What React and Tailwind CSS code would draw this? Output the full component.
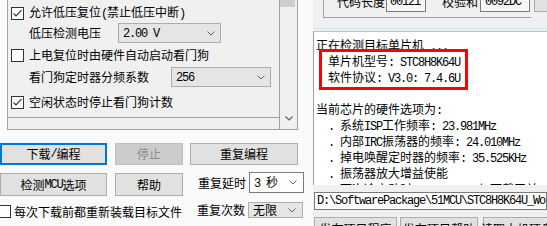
import React from "react";

function T({ s }) {
  const parts = s.split(/([\x00-\x7F]+)/).filter((p) => p.length);
  return (
    <>
      {parts.map((p, i) =>
        /^[\x00-\x7F]+$/.test(p) ? (
          <span key={i} className="font-['Liberation_Mono',monospace] tracking-[-1.2px]">
            {p}
          </span>
        ) : (
          <span key={i}>{p}</span>
        )
      )}
    </>
  );
}

function Check({ checked }) {
  return (
    <svg width="13" height="13" viewBox="0 0 13 13" className="shrink-0 block">
      <rect x="0.5" y="0.5" width="12" height="12" fill="#fff" stroke="#333" />
      {checked && (
        <path d="M2.5 6.5 L5 9 L10.5 3.2" fill="none" stroke="#333" strokeWidth="1.2" />
      )}
    </svg>
  );
}

function Chevron() {
  return (
    <svg width="8" height="5" viewBox="0 0 8 5" className="shrink-0 block">
      <path d="M0.5 0.5 L4 4 L7.5 0.5" fill="none" stroke="#606060" strokeWidth="1" />
    </svg>
  );
}

function Select({ text, className }) {
  return (
    <div className={"flex items-center justify-between border pl-[4px] pr-[5px] shrink-0 " + className}>
      <span className="whitespace-pre">
        <T s={text} />
      </span>
      <Chevron />
    </div>
  );
}

function Btn({ children, className }) {
  return (
    <div className={"flex items-center justify-center shrink-0 whitespace-pre " + className}>{children}</div>
  );
}

const lines = [
  "正在检测目标单片机 ...",
  "  单片机型号: STC8H8K64U",
  "  软件协议: V3.0: 7.4.6U",
  "",
  "当前芯片的硬件选项为:",
  "  . 系统ISP工作频率: 23.981MHz",
  "  . 内部IRC振荡器的频率: 24.010MHz",
  "  . 掉电唤醒定时器的频率: 35.525KHz",
  "  . 振荡器放大增益使能",
  "  . 下次冷启动时，P3.2/P3.3与下载无关",
];

export default function App() {
  return (
    <div className="w-[547px] h-[226px] overflow-hidden flex text-[12px] text-black font-['Noto_Sans_CJK_SC',sans-serif] leading-none">
      {/* Left column */}
      <div className="w-[313px] h-full flex flex-col bg-[#fafafa] shrink-0">
        <div className="ml-[7px] w-[291px] h-[130px] shrink-0 flex border-l border-b border-[#a0a0a0] bg-[#f0f0f0]">
          <div className="w-[271px] h-full flex flex-col pt-[3px]">
            <div className="h-[20px] flex items-center">
              <div className="ml-[3px]">
                <Check checked />
              </div>
              <span className="ml-[5px] whitespace-pre">
                <T s="允许低压复位(禁止低压中断)" />
              </span>
            </div>
            <div className="h-[20px] flex items-center">
              <span className="ml-[21px] w-[89px]">
                <T s="低压检测电压" />
              </span>
              <Select text="2.00 V" className="w-[103px] h-[20px] bg-[#e5e5e5] border-[#adadad]" />
            </div>
            <div className="mt-[2px] h-[20px] flex items-center">
              <div className="ml-[3px]">
                <Check />
              </div>
              <span className="ml-[5px] whitespace-pre">
                <T s="上电复位时由硬件自动启动看门狗" />
              </span>
            </div>
            <div className="mt-[2px] h-[20px] flex items-center">
              <span className="ml-[21px] w-[142px]">
                <T s="看门狗定时器分频系数" />
              </span>
              <Select text="256" className="w-[100px] h-[20px] bg-[#e5e5e5] border-[#adadad]" />
            </div>
            <div className="mt-[5px] h-[20px] flex items-center">
              <div className="ml-[3px]">
                <Check checked />
              </div>
              <span className="ml-[5px] whitespace-pre">
                <T s="空闲状态时停止看门狗计数" />
              </span>
            </div>
            <div className="mt-[5px] h-[1px] bg-[#a0a0a0]" />
          </div>
          <div className="relative w-[19px] h-full border-l border-r border-[#a0a0a0] bg-[#f0f0f0]">
            <div className="w-[15px] h-[7px] bg-[#cdcdcd]" />
            <div className="absolute left-[5px] top-[116px]">
              <svg width="8" height="5" viewBox="0 0 8 5" className="block">
                <path d="M0.5 0.5 L4 4 L7.5 0.5" fill="none" stroke="#606060" strokeWidth="1.2" />
              </svg>
            </div>
          </div>
        </div>

        {/* buttons area */}
        <div className="flex flex-col">
          <div className="mt-[13px] flex items-start">
            <Btn className="w-[107px] h-[22px] border-2 border-[#0078d7] bg-[#e1e1e1]">
              <T s="下载/编程" />
            </Btn>
            <Btn className="ml-[8px] w-[68px] h-[22px] border border-[#bfbfbf] bg-[#cccccc] text-[#8a8a8a]">
              <T s="停止" />
            </Btn>
            <Btn className="ml-[7px] w-[108px] h-[22px] border border-[#adadad] bg-[#e1e1e1]">
              <T s="重复编程" />
            </Btn>
          </div>
          <div className="mt-[8px] h-[23px] flex items-start">
            <Btn className="w-[107px] h-[23px] border border-[#adadad] bg-[#e1e1e1]">
              <T s="检测MCU选项" />
            </Btn>
            <Btn className="ml-[8px] w-[68px] h-[23px] border border-[#adadad] bg-[#e1e1e1]">
              <T s="帮助" />
            </Btn>
            <div className="ml-[15px] -mt-[1px] h-[21px] w-[51px] flex items-center">
              <T s="重复延时" />
            </div>
            <Select text="3 秒" className="-mt-[1px] w-[55px] h-[21px] bg-white border-[#7a7a7a] pl-[3px] pr-[6px]" />
          </div>
          <div className="mt-[6px] flex items-start">
            <div className="-ml-[2px] mt-[3px]">
              <Check />
            </div>
            <div className="ml-[3px] mt-[3px] h-[13px] w-[167px] flex items-center whitespace-pre">
              <T s="每次下载前都重新装载目标文件" />
            </div>
            <div className="ml-[16px] h-[16px] w-[51px] flex items-center">
              <T s="重复次数" />
            </div>
            <Select text="无限" className="w-[55px] h-[16px] bg-[#e5e5e5] border-[#adadad] pl-[3px] pr-[6px]" />
          </div>
        </div>
      </div>

      {/* Right column */}
      <div className="relative w-[234px] h-full bg-[#f0f0f0] flex flex-col shrink-0">
        <div className="ml-[10px] w-[208px] h-[18px] shrink-0 border-l border-b border-[#a0a0a0] flex items-start">
          <div className="ml-[13px] -mt-[8px] h-[20px] w-[49px] flex items-center">
            <T s="代码长度" />
          </div>
          <div className="-mt-[8px] w-[40px] h-[20px] border border-[#7a7a7a] bg-[#f7f7f7] flex items-center pl-[3px]">
            <T s="00121" />
          </div>
          <div className="ml-[16px] -mt-[8px] h-[20px] w-[38px] flex items-center">
            <T s="校验和" />
          </div>
          <div className="-mt-[8px] w-[50px] h-[20px] border border-[#7a7a7a] bg-[#f7f7f7] flex items-center pl-[4px]">
            <T s="0092DC" />
          </div>
        </div>
        <div className="absolute left-[221px] -top-[8px] w-[20px] h-[20px] border border-[#adadad] bg-[#e1e1e1]" />

        <div className="mt-[10px] h-[1px] bg-[#d5e2ee] shrink-0" />

        <div className="relative mt-[2px] h-[154px] shrink-0 border-l border-t border-l-[#a0a0a0] border-t-[#b4c8dc] bg-white overflow-hidden pt-[5px] pl-[2px]">
          {lines.map((l, i) => (
            <div key={i} className="h-[16px] leading-[16px] whitespace-pre">
              <T s={l} />
            </div>
          ))}
          <div className="absolute left-[5px] top-[17px] w-[149px] h-[41px] border-[3px] border-[#ff0000]" />
        </div>

        <div className="mt-[7px] ml-[1px] h-[18px] shrink-0 border border-[#7a7a7a] bg-white flex items-center pl-[2px] whitespace-pre overflow-hidden">
          <T s="D:\SoftwarePackage\51MCU\STC8H8K64U_Workshop\Demo" />
        </div>

        <div className="mt-[7px] ml-[1px] flex items-start shrink-0">
          <Btn className="w-[83px] h-[23px] border border-[#adadad] bg-[#e1e1e1]">
            <T s="发布项目程序" />
          </Btn>
          <Btn className="ml-[3px] w-[78px] h-[23px] border border-[#adadad] bg-[#e1e1e1]">
            <T s="发布项目帮助" />
          </Btn>
          <Btn className="ml-[5px] w-[80px] h-[23px] border border-[#adadad] bg-[#e1e1e1]">
            <T s="读取本机硬盘号" />
          </Btn>
        </div>
      </div>
    </div>
  );
}
